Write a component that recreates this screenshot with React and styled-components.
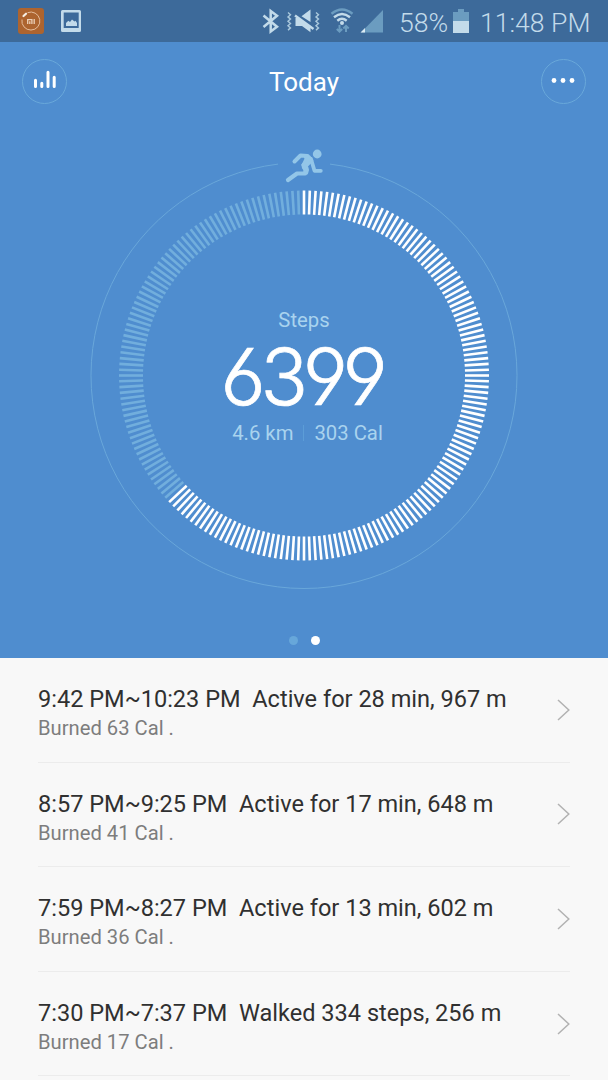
import React from "react";
import styled, { createGlobalStyle } from "styled-components";

const GlobalStyle = createGlobalStyle`
  body {
    margin: 0;
    background: #f8f8f8;
    font-family: Roboto, "Noto Sans", sans-serif;
  }
  svg {
    display: block;
  }
`;

const Screen = styled.div`
  width: 608px;
  height: 1080px;
  overflow: hidden;
  background: #f8f8f8;
`;

const StatusBar = styled.div`
  display: flex;
  align-items: center;
  box-sizing: border-box;
  height: 42px;
  padding: 0 17px 0 18px;
  background: #3d6a9a;
  color: #c3dbea;
`;

const StatusText = styled.span`
  width: ${props => props.$width}px;
  margin-left: ${props => props.$gap}px;
  margin-top: 3px;
  font-size: 26.6px;
  line-height: 32px;
  font-weight: 300;
  white-space: nowrap;
`;

const Spacer = styled.div`
  flex: 1;
`;

const Hero = styled.div`
  height: 616px;
  background: #4f8dcf;
`;

const TitleBar = styled.div`
  display: flex;
  align-items: center;
  justify-content: space-between;
  height: 78px;
  padding: 0 22px;
  h1 {
    margin: 1px 0 0;
    font-size: 26px;
    font-weight: 400;
    color: white;
  }
`;

const RoundButton = styled.button`
  display: flex;
  align-items: center;
  justify-content: center;
  box-sizing: border-box;
  width: 45px;
  height: 45px;
  padding: 0;
  border: 1px solid #69a8da;
  border-radius: 50%;
  background: none;
`;

const Dial = styled.div`
  display: grid;
  justify-content: center;
  height: 500px;
  > * {
    grid-area: 1 / 1;
  }
`;

const Summary = styled.div`
  display: flex;
  flex-direction: column;
  align-items: center;
  padding-top: 188px;
  color: #a9d3ee;
  font-size: 20.3px;
  line-height: 24px;
`;

const Count = styled.div`
  margin: 7px 5px 6px 0;
  height: 76px;
  font-family: Inter, sans-serif;
  font-size: 78.5px;
  font-weight: 350;
  font-feature-settings: "cv03" 1, "cv04" 1;
  line-height: 76px;
  letter-spacing: -5.3px;
  color: white;
  -webkit-text-stroke: 0.7px white;
`;

const Totals = styled.div`
  display: flex;
  align-items: center;
  margin-left: 7px;
`;

const Divider = styled.div`
  width: 1px;
  height: 16px;
  margin: 0 10px;
  background: #5c9dd7;
`;

const Pager = styled.div`
  display: flex;
  justify-content: center;
  gap: 13px;
  padding-top: 16px;
`;

const Dot = styled.span`
  width: 9px;
  height: 9px;
  border-radius: 50%;
  background: ${props => (props.$active ? "white" : "#67a7da")};
`;

const List = styled.div`
  padding: 0 38px;
`;

const Row = styled.div`
  display: flex;
  align-items: center;
  justify-content: space-between;
  box-sizing: border-box;
  height: 104.6px;
  border-bottom: 1px solid #ececec;
`;

const RowText = styled.div`
  padding-top: 7.5px;
`;

const RowTitle = styled.div`
  font-size: 23.55px;
  line-height: 30px;
  color: #303030;
  white-space: pre;
`;

const RowNote = styled.div`
  font-size: 20.2px;
  line-height: 29px;
  color: #7d7d7d;
`;

const activities = [
  { time: "9:42 PM~10:23 PM", text: "Active for 28 min, 967 m", cal: 63 },
  { time: "8:57 PM~9:25 PM", text: "Active for 17 min, 648 m", cal: 41 },
  { time: "7:59 PM~8:27 PM", text: "Active for 13 min, 602 m", cal: 36 },
  { time: "7:30 PM~7:37 PM", text: "Walked 334 steps, 256 m", cal: 17 }
];

const TICKS = 200;
const FILLED = 127;

const AppIcons = () => (
  <svg width="70" height="28" viewBox="18 7 70 28">
    <rect x="18" y="8" width="26" height="26" rx="3" fill="#ad642f" />
    <path
      d="M22 19.500a9 9 0 1 0 5.500-6.800"
      fill="none"
      stroke="#e5bd9c"
      strokeWidth="1"
    />
    <path d="M23.500 16l2.500-2.300" stroke="#f6eee4" strokeWidth="2.200" strokeLinecap="round" />
    <path
      d="M27.700 24v-4.400h4.200v4.400M29.800 21.200v2.800M34.200 19v5"
      fill="none"
      stroke="#ecd0b8"
      strokeWidth="1.300"
    />
    <path
      fillRule="evenodd"
      d="M63 10h16.500q1.500 0 1.500 1.500v19q0 1.500-1.500 1.500h-17q-1.500 0-1.500-1.500v-19q0-1.500 1.500-1.500zM63.700 12.500v15.500h15v-15.500z"
      fill="#c3dbea"
    />
    <path d="M66 26v-3l2.300-2.200 1.700 1.200 2-2.500 2.500 2 1-.8 1.500 2.300v3z" fill="#c3dbea" />
  </svg>
);

const StatusIcons = () => (
  <svg width="123" height="28" viewBox="261 7 123 28" fill="none">
    <path
      d="M263.500 15.500l13.500 11.300-6.300 4.700v-20.500l6.300 4.700L263.500 27"
      stroke="#c3dbea"
      strokeWidth="2.500"
    />
    <path
      d="M288 12.500l2.500 2.200-2.500 2.200 2.500 2.200-2.500 2.200 2.500 2.200-2.500 2.200 2.500 2.200-2.500 2.200M316 12.500l2.500 2.200-2.500 2.200 2.500 2.200-2.500 2.200 2.500 2.200-2.500 2.200 2.500 2.200-2.500 2.200"
      stroke="#a9c8dc"
      strokeWidth="1.400"
    />
    <path
      d="M295.500 18h3l12 9v5.300l-8.500-6.300h-6.500zM301.500 16.300l9-6.800v12.500z"
      fill="#c3dbea"
    />
    <path d="M295 15.500l18.500 13.500" stroke="#c3dbea" strokeWidth="2.400" />
    <path d="M331.500 13.700q10.500-8.500 21 0" stroke="#6b9cc0" strokeWidth="2.400" />
    <path
      d="M334 17.200q8-6.500 16 0M337.300 20.700q4.700-3.800 9.400 0"
      stroke="#c3dbea"
      strokeWidth="2.400"
    />
    <circle cx="342" cy="23" r="2" fill="#c3dbea" />
    <path
      d="M339.500 25v7M336.800 29l2.700 2.700 2.700-2.700M346 32v-6M343.300 28.500l2.700-2.700 2.700 2.700"
      stroke="#6b9cc0"
      strokeWidth="2"
    />
    <path d="M361 32.500L383 10v22.500z" fill="#6b9cc0" />
    <path d="M360.500 32.500l4.500-4.500v4.500z" fill="#dcebf4" />
  </svg>
);

const BatteryIcon = () => (
  <svg width="16" height="24" viewBox="0 0 16 24">
    <path d="M5 0h6v3h5v9H0V3h5z" fill="#6b9cc0" />
    <path d="M0 12h16v12H0z" fill="#c3dbea" />
  </svg>
);

const Ring = () => (
  <svg width="430" height="471" viewBox="89 120 430 471">
    <path
      d="M330 164.100A213 213 0 1 1 278 164.100"
      fill="none"
      stroke="#69a7da"
      strokeWidth="1"
    />
    {Array.from({ length: TICKS }, (_, i) => (
      <line
        key={i}
        x1="304"
        x2="304"
        y1="190.500"
        y2="214.500"
        stroke={i < FILLED ? "white" : "#71aedd"}
        strokeWidth="2.600"
        transform={`rotate(${(i * 360) / TICKS} 304 375.500)`}
      />
    ))}
    <g stroke="#93c6e8" strokeLinecap="round" strokeLinejoin="round" fill="none">
      <path d="M294.500 161.500l6-6 7 .5" strokeWidth="4" />
      <path d="M304.500 156l5 .3 2.800 4.200-5.300 5.500 1 4-1 3.500-4-5.500-.5-3 3-6z" fill="#93c6e8" strokeWidth="2" />
      <path d="M311 159l3.500 11.800h6.300" strokeWidth="3.800" />
      <path d="M303.500 165l2.500 3.500-1 5h-8l-9 6.500" strokeWidth="4.200" />
      <circle cx="317.200" cy="154" r="4.400" fill="#93c6e8" stroke="none" />
    </g>
  </svg>
);

const Chevron = () => (
  <svg width="14" height="24" viewBox="0 0 14 24">
    <path d="M2 2L12.800 12 2 22" fill="none" stroke="#b2b2b2" strokeWidth="1.500" />
  </svg>
);

const Activity = ({ activity }) => (
  <Row>
    <RowText>
      <RowTitle>{`${activity.time}  ${activity.text}`}</RowTitle>
      <RowNote>Burned {activity.cal} Cal .</RowNote>
    </RowText>
    <Chevron />
  </Row>
);

export default function App() {
  return (
    <Screen>
      <GlobalStyle />
      <StatusBar>
        <AppIcons />
        <Spacer />
        <StatusIcons />
        <StatusText $width={54} $gap={15}>58%</StatusText>
        <BatteryIcon />
        <StatusText $width={111} $gap={11}>11:48 PM</StatusText>
      </StatusBar>
      <Hero>
        <TitleBar>
          <RoundButton aria-label="Statistics">
            <svg width="24" height="22" viewBox="0 0 24 22" stroke="white" strokeWidth="3" strokeLinecap="round">
              <path d="M2.500 10.300v6.200M8.800 13.300v3.200M15 2.300v14.200M21.200 7.300v9.200" />
            </svg>
          </RoundButton>
          <h1>Today</h1>
          <RoundButton aria-label="More">
            <svg width="24" height="6" viewBox="0 0 24 6" fill="white">
              <circle cx="3" cy="2.500" r="2.400" />
              <circle cx="12" cy="2.500" r="2.400" />
              <circle cx="21" cy="2.500" r="2.400" />
            </svg>
          </RoundButton>
        </TitleBar>
        <Dial>
          <Ring />
          <Summary>
            <div>Steps</div>
            <Count>6399</Count>
            <Totals>
              <span>4.6 km</span>
              <Divider />
              <span>303 Cal</span>
            </Totals>
          </Summary>
        </Dial>
        <Pager>
          <Dot />
          <Dot $active />
        </Pager>
      </Hero>
      <List>
        {activities.map(activity => (
          <Activity key={activity.time} activity={activity} />
        ))}
      </List>
    </Screen>
  );
}
